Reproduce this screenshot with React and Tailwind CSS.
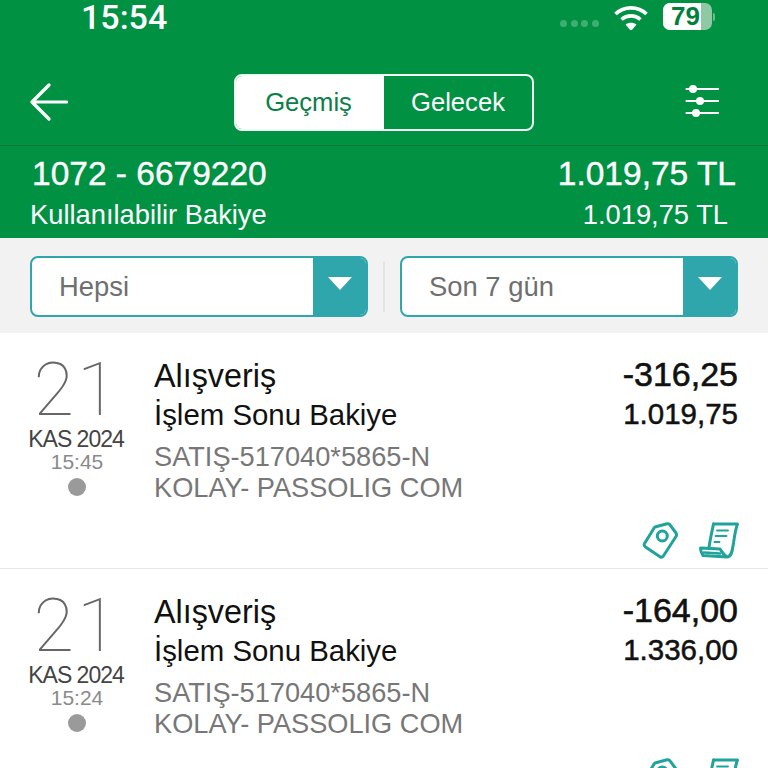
import React from "react";

const sans = "font-['Liberation_Sans',Arial,sans-serif]";

function Wifi() {
  return (
    <svg width="34" height="26" viewBox="0 0 34 26" fill="none" stroke="white" strokeWidth="3.6">
      <path d="M1.5 10C10 1.8 24 1.8 32.5 10" />
      <path d="M7.5 15.5C13 10.7 21 10.7 26.5 15.5" />
      <path d="M17 27L11.5 20.5C14.5 18 19.5 18 22.5 20.5Z" fill="white" stroke="none" />
    </svg>
  );
}

function Sliders() {
  return (
    <svg width="36" height="34" viewBox="0 0 36 34" fill="white" stroke="white">
      <path d="M2.5 5H34M2.5 17H34M2.5 29H34" strokeWidth="2.2" strokeLinecap="round" />
      <circle cx="9" cy="5" r="4" stroke="none" />
      <circle cx="16" cy="17" r="4" stroke="none" />
      <circle cx="12" cy="29" r="4" stroke="none" />
    </svg>
  );
}

function Arrow() {
  return (
    <svg width="38" height="38" viewBox="0 0 38 38" fill="none" stroke="white" strokeWidth="3.2" strokeLinecap="round" strokeLinejoin="round">
      <path d="M36.5 19H2M19 2L2 19L19 36" />
    </svg>
  );
}

function Caret() {
  return (
    <svg width="24" height="14" viewBox="0 0 24 14" fill="white"><path d="M0 0H24L12 13Z" /></svg>
  );
}

function Select({ label }) {
  return (
    <div className="w-[338px] h-[61px] flex rounded-[8px] border-2 border-[#2fa6ac] bg-white overflow-hidden">
      <div className="flex-1 pl-[27px] pt-[1px] flex items-center text-[27.4px] text-[#6f6f6f]">{label}</div>
      <div className="w-[53px] bg-[#2fa6ac] flex items-center justify-center pb-[6px]"><Caret /></div>
    </div>
  );
}

function Tag() {
  return (
    <svg width="37" height="37" viewBox="0 0 37 37" fill="none" stroke="#20a39b" strokeWidth="3" strokeLinejoin="round">
      <path d="M13 5L25 1.8Q27 1.3 28 2.8L34 11Q35 13 34 14.5L21.5 33.8Q20 35.8 18 34.8L3.5 25Q1.5 23.5 2.5 21.5L11.5 7Q12 5.5 13 5Z" />
      <circle cx="20.3" cy="14" r="5" />
    </svg>
  );
}

function Receipt() {
  return (
    <svg width="40" height="37" viewBox="0 0 40 37" fill="none" stroke="#20a39b" strokeWidth="3" strokeLinejoin="round" strokeLinecap="round">
      <path d="M14.5 2H38.5C36.5 7 35.5 14 34.5 21C33.5 27 33 35 28 35L4 33.5C2.5 31.5 1.5 28 1.5 26L21 27C23 30 24.5 33 28 35" />
      <path d="M14.5 2C13 9 11 18 10 25.5" />
      <path d="M18 8.5H29M16.5 14H27.5M15.5 20H20.5" strokeWidth="1.8" />
      <path d="M5 30.5L21 31.5" strokeWidth="2.5" />
    </svg>
  );
}

function Row({ day, time, amount, balance }) {
  return (
    <div className="h-[236px] shrink-0 bg-white border-b border-[#e8e8e8] flex flex-col">
      <div className="flex">
        <div className="w-[154px] shrink-0 flex flex-col items-center text-center">
          <div className="mt-[21px] h-[72px] leading-[72px] text-[74px] tracking-[3px] text-[#666] font-['Roboto',sans-serif] font-thin">{day}</div>
          <div className="mt-[2px] pr-[2px] h-[22px] leading-[22px] text-[23px] tracking-[-1px] text-[#444]">KAS 2024</div>
          <div className="mt-[1px] h-[22px] leading-[22px] text-[21px] text-[#8a8a8a]">{time}</div>
          <div className="mt-[5px] w-[18px] h-[18px] rounded-full bg-[#9a9a9a]" />
        </div>
        <div className="flex-1 flex flex-col pt-[23px] min-w-0">
          <div className="h-[40px] leading-[40px] text-[32.3px] text-[#111]">Alışveriş</div>
          <div className="h-[38px] leading-[38px] text-[29.4px] text-[#111]">İşlem Sonu Bakiye</div>
          <div className="mt-[6px] h-[33px] leading-[33px] text-[27.2px] text-[#777]">SATIŞ-517040*5865-N</div>
          <div className="h-[30px] leading-[30px] text-[27.2px] text-[#777]">KOLAY- PASSOLIG COM</div>
        </div>
        <div className="w-[160px] pr-[30px] flex flex-col items-end pt-[21px]">
          <div className="h-[40px] leading-[40px] text-[34px] text-[#111] [-webkit-text-stroke:0.6px_#111]">{amount}</div>
          <div className="h-[39px] leading-[39px] text-[29.5px] text-[#111] [-webkit-text-stroke:0.5px_#111]">{balance}</div>
        </div>
      </div>
      <div className="mt-auto mb-[9px] pr-[29px] flex justify-end items-center gap-[20px]">
        <Tag />
        <Receipt />
      </div>
    </div>
  );
}

export default function App() {
  return (
    <div className={`${sans} w-[768px] h-[768px] overflow-hidden bg-white flex flex-col`}>
      <div className="h-[146px] bg-[#009143] border-b border-[#067a3a] shrink-0 flex flex-col">
        <div className="h-[74px] flex pl-[81px] pr-[53px] justify-between items-start">
          <span className="font-['Roboto',sans-serif] font-medium text-[34px] leading-[34px] text-white">15:54</span>
          <div className="flex items-center gap-[15px] pt-[3px]">
            <div className="flex gap-[3.6px] pt-[14px]">
              <span className="w-[7px] h-[7px] rounded-full bg-[#3fae73]" />
              <span className="w-[7px] h-[7px] rounded-full bg-[#3fae73]" />
              <span className="w-[7px] h-[7px] rounded-full bg-[#3fae73]" />
              <span className="w-[7px] h-[7px] rounded-full bg-[#3fae73]" />
            </div>
            <Wifi />
            <div className="flex items-center gap-[1px]">
              <div className="relative w-[49px] h-[27px]">
                <div className="h-full rounded-[7px] overflow-hidden bg-[#8ec9a3]">
                  <div className="w-[38px] h-full bg-white" />
                </div>
                <span className="absolute left-[8px] top-0 font-bold text-[26px] leading-[27px] text-[#00803c]">79</span>
              </div>
              <div className="w-[2px] h-[8px] bg-[#6fbb8b] rounded-r" />
            </div>
          </div>
        </div>
        <div className="flex items-start pl-[30px] pr-[48px]">
          <div className="w-[204px] pt-[9px]"><Arrow /></div>
          <div className="flex w-[300px] h-[57px] rounded-[8px] border-2 border-[#f0faf4] overflow-hidden">
            <div className="w-[148px] pr-[3px] bg-white text-[#0a7f47] text-[25.6px] flex items-center justify-center">Geçmiş</div>
            <div className="flex-1 text-white text-[25.6px] flex items-center justify-center">Gelecek</div>
          </div>
          <div className="ml-auto pt-[10px]"><Sliders /></div>
        </div>
      </div>
      <div className="h-[92px] bg-[#009143] shrink-0 flex justify-between pl-[30px] pr-[32px] pt-[10px]">
        <div className="flex flex-col">
          <div className="h-[36px] leading-[36px] text-[33.5px] text-white pl-[2px] [-webkit-text-stroke:0.4px_white]">1072 - 6679220</div>
          <div className="mt-[5px] h-[36px] leading-[36px] text-[27.3px] text-white">Kullanılabilir Bakiye</div>
        </div>
        <div className="flex flex-col items-end">
          <div className="h-[36px] leading-[36px] text-[33.5px] text-white [-webkit-text-stroke:0.4px_white]">1.019,75 TL</div>
          <div className="mt-[5px] h-[36px] leading-[36px] text-[27.3px] text-white pr-[8px]">1.019,75 TL</div>
        </div>
      </div>
      <div className="h-[95px] bg-[#f2f2f2] shrink-0 flex items-start pl-[30px] pt-[18px]">
        <Select label="Hepsi" />
        <div className="w-[2px] h-[50px] mt-[6px] mx-[15px] bg-[#e4e4e4]" />
        <Select label="Son 7 gün" />
      </div>
      <Row day="21" time="15:45" amount="-316,25" balance="1.019,75" />
      <Row day="21" time="15:24" amount="-164,00" balance="1.336,00" />
    </div>
  );
}
